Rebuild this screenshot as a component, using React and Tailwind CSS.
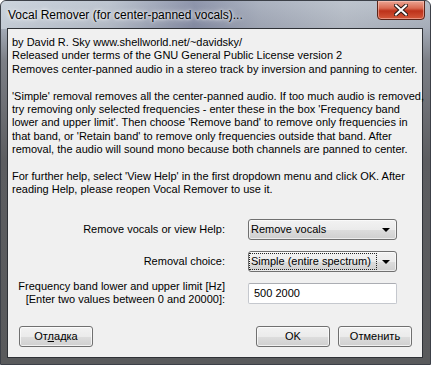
const ui = { fontFamily: '"Liberation Sans", Arial, sans-serif' }

function Combo({ value, focused }) {
  return (
    <div className="relative flex h-[21px] w-[149px] items-center rounded-[3px] border border-[#707070] bg-[linear-gradient(180deg,#f2f2f2_0%,#ebebeb_50%,#dddddd_51%,#cfcfcf_100%)] pl-[1px] shadow-[inset_0_0_0_1px_rgba(255,255,255,0.6)]">
      <span
        className={
          'px-[1px] leading-[15px] ' +
          (focused ? 'outline outline-1 outline-dotted outline-[#222] w-[126px]' : '')
        }
      >
        {value}
      </span>
      <svg className="absolute right-[6px] top-[8px]" width="8" height="4" viewBox="0 0 8 4">
        <path d="M0 0h8L4 4z" fill="#000" />
      </svg>
    </div>
  )
}

function Button({ children, w = 'w-[74px]' }) {
  return (
    <div
      className={
        w +
        ' flex h-[21px] items-center justify-center rounded-[3px] border border-[#707070] bg-[linear-gradient(180deg,#f2f2f2_0%,#ebebeb_50%,#dddddd_51%,#cfcfcf_100%)] shadow-[inset_0_0_0_1px_rgba(255,255,255,0.7)]'
      }
    >
      {children}
    </div>
  )
}

export default function App() {
  return (
    <div
      className="relative h-[365px] w-[431px] overflow-hidden rounded-t-[6px] border border-[#3c4048] bg-[linear-gradient(180deg,#b9c1cc_0px,#a3aab6_28px,#7c7f86_60px,#5c5d60_160px,#595a5c_100%)] text-[11px] text-black"
      style={ui}
    >
      {/* title bar haze */}
      <div className="absolute inset-x-0 top-0 h-[28px] bg-[linear-gradient(90deg,rgba(220,228,236,0.55)_0%,rgba(200,208,218,0.35)_25%,rgba(80,86,125,0.4)_45%,rgba(140,145,165,0.3)_60%,rgba(200,204,210,0.3)_80%,rgba(170,176,186,0.2)_100%)]" />

      {/* title */}
      <div className="relative flex h-[28px] items-center pl-[7px] text-[12px] [text-shadow:0_0_6px_#fff,0_0_3px_#fff]">
        Vocal Remover (for center-panned vocals)...
      </div>

      {/* close button */}
      <div className="absolute right-[5px] top-[-1px] flex h-[20px] w-[48px] items-center justify-center rounded-b-[4px] border border-[#5b2418] bg-[linear-gradient(180deg,#eba593_0%,#d96a52_40%,#bd321a_55%,#d4583a_100%)] shadow-[inset_0_0_0_1px_rgba(255,210,200,0.5)]">
        <svg width="14" height="12" viewBox="0 0 14 12">
          <path
            d="M2 1.5l10 9M12 1.5l-10 9"
            stroke="#2b1a16"
            strokeWidth="4"
            strokeLinecap="square"
          />
          <path
            d="M2 1.5l10 9M12 1.5l-10 9"
            stroke="#ffffff"
            strokeWidth="2"
            strokeLinecap="square"
          />
        </svg>
      </div>

      {/* client area */}
      <div className="absolute left-[6px] right-[7px] top-[27px] bottom-[6px] border border-[#2e3136] bg-[#f0f0f0]">
        <div className="whitespace-nowrap pl-[4px] pt-[7px] leading-[13.4px]">
          <p>by David R. Sky www.shellworld.net/~davidsky/</p>
          <p>Released under terms of the GNU General Public License version 2</p>
          <p>Removes center-panned audio in a stereo track by inversion and panning to center.</p>
          <p>&nbsp;</p>
          <p>'Simple' removal removes all the center-panned audio. If too much audio is removed,</p>
          <p>try removing only selected frequencies - enter these in the box 'Frequency band</p>
          <p>lower and upper limit'. Then choose 'Remove band' to remove only frequencies in</p>
          <p>that band, or 'Retain band' to remove only frequencies outside that band. After</p>
          <p>removal, the audio will sound mono because both channels are panned to center.</p>
          <p>&nbsp;</p>
          <p>For further help, select 'View Help' in the first dropdown menu and click OK. After</p>
          <p>reading Help, please reopen Vocal Remover to use it.</p>
        </div>

        <div className="mt-[22px] flex flex-col gap-[11px]">
          <div className="flex h-[21px] items-center">
            <div className="w-[217px] text-right">Remove vocals or view Help:</div>
            <div className="ml-[23px]">
              <Combo value="Remove vocals" />
            </div>
          </div>
          <div className="flex h-[21px] items-center">
            <div className="w-[217px] text-right">Removal choice:</div>
            <div className="ml-[23px]">
              <Combo value="Simple (entire spectrum)" focused />
            </div>
          </div>
          <div className="flex h-[21px] items-center">
            <div className="w-[217px] text-right leading-[13px]">
              <p>Frequency band lower and upper limit [Hz]</p>
              <p>[Enter two values between 0 and 20000]:</p>
            </div>
            <div className="ml-[23px] flex h-[21px] w-[149px] items-center rounded-[2px] border border-[#c5c8ce] border-t-[#abadb3] bg-white pl-[5px]">
              500 2000
            </div>
          </div>
        </div>

        <div className="mt-[22px] flex items-center pl-[11px] pr-[10px]">
          <Button>
            <span>
              От<span className="underline">л</span>адка
            </span>
          </Button>
          <div className="flex-1" />
          <Button>OK</Button>
          <div className="w-[8px]" />
          <Button>Отменить</Button>
        </div>
      </div>
    </div>
  )
}
